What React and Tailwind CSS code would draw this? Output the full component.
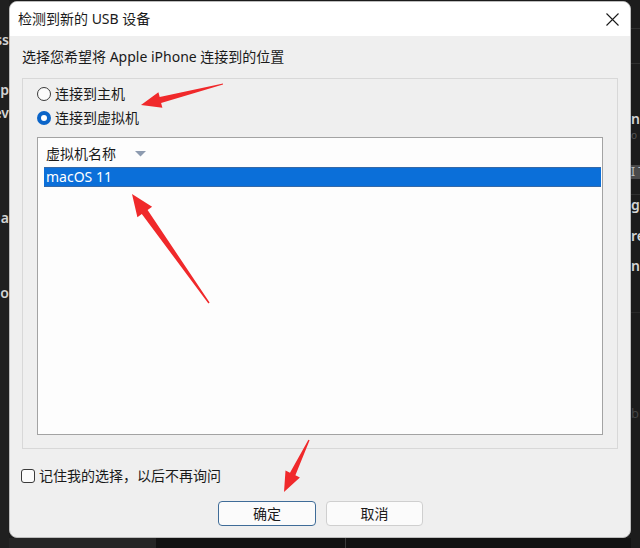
import React from "react";

const F = "font-['Noto_Sans','Noto_Sans_CJK_SC',sans-serif]";

function Arrows() {
  return (
    <svg className="absolute left-0 top-0 pointer-events-none" width="640" height="548" viewBox="0 0 640 548">
      <polygon fill="#f0292b" points="141,105 162.4,107.8 161.1,102.9 223,84.6 223,83.4 159.7,97.1 158.4,92.3" />
      <polygon fill="#f0292b" points="132,194 137.4,217.2 141.8,214 208.4,303.4 209.6,302.6 147.6,210 152.1,206.8" />
      <polygon fill="#f0292b" points="284,492 299.9,477.5 295.4,475.3 309.6,440.3 308.4,439.7 290,472.7 285.5,470.5" />
    </svg>
  );
}

function LeftStrip() {
  const row = "h-[20px] flex justify-end whitespace-nowrap text-[14px] leading-[20px] font-semibold text-[#d4d4d4]";
  return (
    <div className={`w-[9px] h-full overflow-hidden bg-[#202020] flex flex-col ${F}`}>
      <div className={`${row} mt-[30px] text-[#9a9a9a]`}>ss</div>
      <div className={`${row} mt-[30px]`}>App</div>
      <div className={`${row} mt-[3px]`}>Dev</div>
      <div className={`${row} mt-[85px]`}>Ma</div>
      <div className={`${row} mt-[55px]`}>No</div>
    </div>
  );
}

function RightStrip() {
  const row = "h-[20px] whitespace-nowrap text-[14px] leading-[20px] font-semibold text-[#d4d4d4]";
  return (
    <div className={`w-[9px] h-full overflow-hidden bg-[#1c1c1c] flex flex-col ${F}`}>
      <div className="mt-[28px] h-px bg-[#303030]" />
      <div className="mt-[34px] h-px bg-[#303030]" />
      <div className={`${row} mt-[45px]`}>name</div>
      <div className="h-[12px] text-[10px] leading-[12px] text-[#555]">o</div>
      <div className="mt-[24px] h-[14px] bg-[#4a4a4a] text-[12px] leading-[14px] text-[#bbb] whitespace-nowrap">I T</div>
      <div className="mt-[15px] h-px bg-[#303030]" />
      <div className={`${row}`}>gt</div>
      <div className={`${row} mt-[11px]`}>re</div>
      <div className={`${row} mt-[10px]`}>nt</div>
      <div className="mt-[36px] h-px bg-[#2a2a2a]" />
      <div className="mt-[90px] h-[20px] text-[13px] leading-[20px] text-[#444] whitespace-nowrap">b</div>
    </div>
  );
}

export default function App() {
  return (
    <div className={`relative w-[640px] h-[548px] overflow-hidden bg-[#1c1c1c] flex ${F}`}>
      <LeftStrip />
      <div className="w-[622px] h-full flex flex-col">
        <div className="h-[1px] bg-[#1a1a1a]" />
        <div className="h-[537px] rounded-[8px] overflow-hidden flex flex-col bg-[#efefef] border border-[#bdbdbd]">
          {/* title bar */}
          <div className="h-[34px] shrink-0 bg-white flex items-center justify-between pl-[8px] pr-[11px]">
            <span className="text-[14px] leading-[20px] text-[#1a1a1a]">检测到新的 USB 设备</span>
            <svg width="13" height="13" viewBox="0 0 13 13">
              <path d="M0.5 0.5 L12.5 12.5 M12.5 0.5 L0.5 12.5" stroke="#1a1a1a" strokeWidth="1.1" fill="none" />
            </svg>
          </div>
          {/* body */}
          <div className="flex-1 flex flex-col px-[12px]">
            <div className="mt-[11px] text-[14px] leading-[20px] text-[#1a1a1a]">选择您希望将 Apple iPhone 连接到的位置</div>
            <div className="mt-[11px] w-[596px] h-[371px] border border-[#d8d8d8] flex flex-col pl-[14px] pr-[14px]">
              <div className="mt-[5px] h-[20px] flex items-center gap-[4px]">
                <div className="w-[14px] h-[14px] rounded-full border border-[#3a3a3a] bg-[#fbfbfb]" />
                <span className="text-[14px] leading-[20px] text-[#1a1a1a]">连接到主机</span>
              </div>
              <div className="mt-[4px] h-[20px] flex items-center gap-[4px]">
                <div className="w-[14px] h-[14px] rounded-full bg-[#0a64c8] flex items-center justify-center">
                  <div className="w-[6px] h-[6px] rounded-full bg-white" />
                </div>
                <span className="text-[14px] leading-[20px] text-[#1a1a1a]">连接到虚拟机</span>
              </div>
              <div className="mt-[9px] h-[298px] border border-[#a3a3a3] bg-[#fdfdfd] flex flex-col">
                <div className="h-[29px] flex items-start pt-[6px] pl-[8px]">
                  <span className="text-[14px] leading-[20px] text-[#1a1a1a]">虚拟机名称</span>
                  <svg className="ml-[19px] mt-[7px]" width="11" height="6" viewBox="0 0 11 6">
                    <polygon points="0,0 11,0 5.5,5.5" fill="#8d9bb0" />
                  </svg>
                </div>
                <div className="ml-[6px] mr-[1px] h-[20px] bg-[#0b6fd9] border-y border-[#3569a8] flex items-center pl-[2px]">
                  <span className="text-[14px] leading-[18px] text-white">macOS 11</span>
                </div>
              </div>
            </div>
            <div className="mt-[17px] h-[20px] flex items-center gap-[4px] -ml-[1px]">
              <div className="w-[14px] h-[14px] rounded-[3px] border border-[#3a3a3a] bg-[#fbfbfb]" />
              <span className="text-[14px] leading-[20px] text-[#1a1a1a]">记住我的选择，以后不再询问</span>
            </div>
            <div className="mt-[15px] flex gap-[10px] pl-[196px]">
              <div className="w-[98px] h-[25px] rounded-[4px] border border-[#3f6c98] bg-[#fbfbfb] flex items-center justify-center text-[14px] text-[#1a1a1a]">确定</div>
              <div className="w-[97px] h-[25px] rounded-[4px] border border-[#cfcfcf] bg-[#fbfbfb] flex items-center justify-center text-[14px] text-[#1a1a1a]">取消</div>
            </div>
          </div>
        </div>
        <div className="flex-1 flex">
          <div className="w-[147px] bg-[#262626]" />
          <div className="w-[189px] bg-[#121212]" />
          <div className="w-px bg-[#3c3c3c]" />
          <div className="flex-1 bg-[#121212]" />
        </div>
      </div>
      <RightStrip />
      <Arrows />
    </div>
  );
}
